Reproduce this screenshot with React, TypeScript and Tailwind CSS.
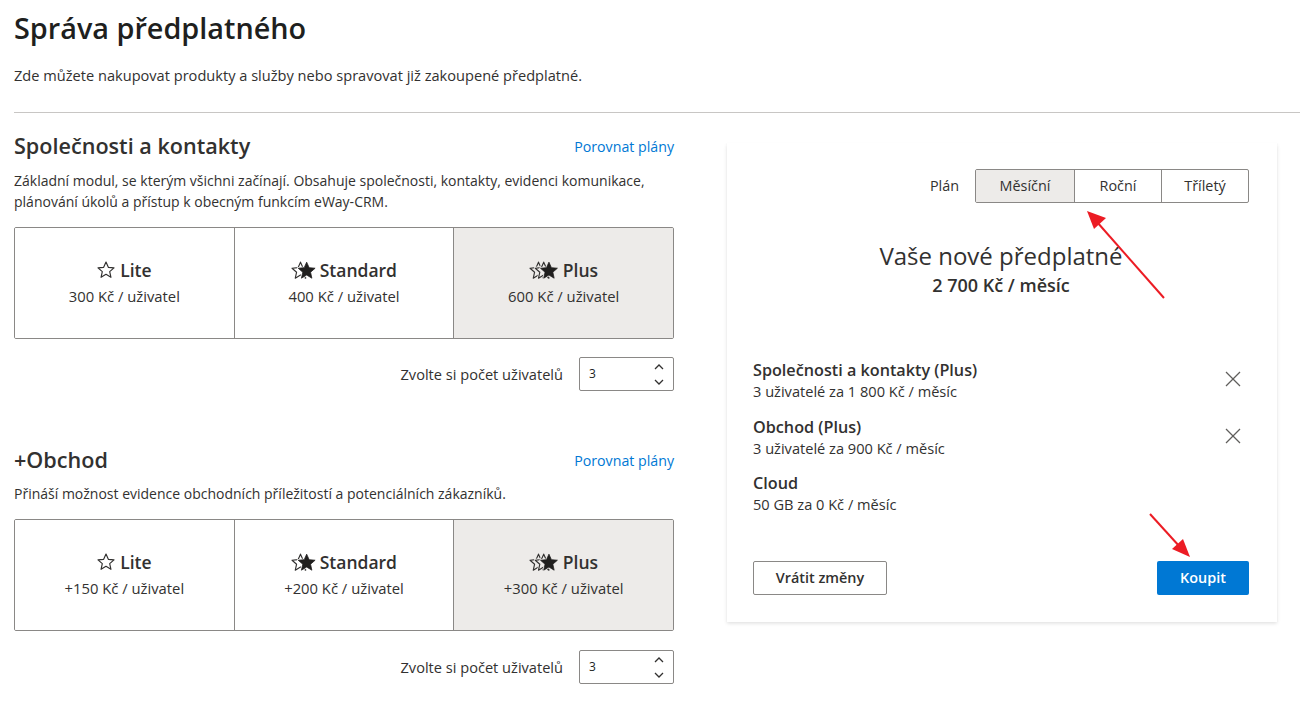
import React from "react";

const FONT = { fontFamily: '"Open Sans", "Noto Sans", Arial, sans-serif' };

const STAR = "10,1.2 12.6,7 18.9,7.6 14.1,11.8 15.5,18.1 10,14.8 4.5,18.1 5.9,11.8 1.1,7.6 7.4,7";

function Stars({ n, bg }: { n: number; bg: string }) {
  if (n === 1) {
    return (
      <svg width="18" height="18" viewBox="0 0 20 20" className="mr-[5px]">
        <polygon points={STAR} fill="none" stroke="#323130" strokeWidth="1.3" strokeLinejoin="round" />
      </svg>
    );
  }
  const w = n === 2 ? 26 : 31;
  return (
    <svg width={w * 0.95} height="19" viewBox={`0 0 ${w} 20`} className="mr-[4px]">
      <polygon points={STAR} fill={bg} stroke="#323130" strokeWidth="1.2" strokeLinejoin="round" />
      {n === 3 && (
        <g transform="translate(5.5,0)">
          <polygon points={STAR} fill={bg} stroke={bg} strokeWidth="3" strokeLinejoin="round" />
          <polygon points={STAR} fill={bg} stroke="#323130" strokeWidth="1.2" strokeLinejoin="round" />
        </g>
      )}
      <g transform={`translate(${n === 2 ? 6.5 : 11},0)`}>
        <polygon points={STAR} fill="#201f1e" stroke={bg} strokeWidth="2.6" strokeLinejoin="round" />
        <polygon points={STAR} fill="#201f1e" stroke="#201f1e" strokeWidth="0.8" strokeLinejoin="round" />
      </g>
    </svg>
  );
}

function Tier({ name, price, stars, selected, last }: { name: string; price: string; stars: number; selected?: boolean; last?: boolean }) {
  const bg = selected ? "#edebe9" : "#ffffff";
  return (
    <div
      className={`flex-1 flex flex-col items-center justify-center ${last ? "" : "border-r border-[#8a8886]"} ${selected ? "bg-[#edebe9]" : "bg-white"}`}
    >
      <div className="flex items-center h-[24px] mt-[-2px]">
        <Stars n={stars} bg={bg} />
        <span className="text-[17.5px] font-semibold leading-[24px] text-[#323130]">{name}</span>
      </div>
      <div className="text-[14.8px] leading-[20px] text-[#323130] mt-[4px]">{price}</div>
    </div>
  );
}

function Chevron({ up }: { up?: boolean }) {
  return (
    <svg width="10" height="6" viewBox="0 0 10 6">
      <polyline
        points={up ? "1,5 5,1 9,5" : "1,1 5,5 9,1"}
        fill="none"
        stroke="#323130"
        strokeWidth="1.3"
      />
    </svg>
  );
}

function NumberInput() {
  return (
    <div className="flex items-center justify-end">
      <span className="text-[14.6px] leading-[20px] text-[#323130] mr-[16px]">Zvolte si počet uživatelů</span>
      <div className="w-[95px] h-[34px] border border-[#8a8886] rounded-[2px] flex items-center justify-between pl-[9px] pr-[9px] bg-white">
        <span className="text-[12px] text-[#201f1e]">3</span>
        <div className="flex flex-col items-center gap-[9px]">
          <Chevron up />
          <Chevron />
        </div>
      </div>
    </div>
  );
}

function Section({
  title,
  desc,
  tiers,
  first,
}: {
  title: string;
  desc: React.ReactNode;
  tiers: { name: string; price: string }[];
  first?: boolean;
}) {
  return (
    <div className={first ? "mt-[19px]" : "mt-[55px]"}>
      <div className="flex items-center justify-between h-[28px]">
        <h2 className="text-[21.6px] leading-[28px] font-semibold text-[#323130]">{title}</h2>
        <a className="text-[14.2px] text-[#0078d4] leading-[20px] mt-[2px]">Porovnat plány</a>
      </div>
      <p className={`text-[14px] leading-[21px] text-[#323130] ${first ? "mt-[10px]" : "mt-[9px]"}`}>{desc}</p>
      <div className="mt-[15px] h-[112px] border border-[#8a8886] rounded-[2px] flex overflow-hidden">
        <Tier name={tiers[0].name} price={tiers[0].price} stars={1} />
        <Tier name={tiers[1].name} price={tiers[1].price} stars={2} />
        <Tier name={tiers[2].name} price={tiers[2].price} stars={3} selected last />
      </div>
      <div className={first ? "mt-[18px]" : "mt-[19px]"}>
        <NumberInput />
      </div>
    </div>
  );
}

function CloseIcon() {
  return (
    <svg width="16" height="16" viewBox="0 0 16 16" className="mr-[8px] mt-[-2px]">
      <line x1="1" y1="1" x2="15" y2="15" stroke="#605e5c" strokeWidth="1.2" />
      <line x1="15" y1="1" x2="1" y2="15" stroke="#605e5c" strokeWidth="1.2" />
    </svg>
  );
}

function Item({ title, sub, removable }: { title: string; sub: string; removable?: boolean }) {
  return (
    <div className="flex items-center justify-between">
      <div>
        <div className="text-[16.2px] leading-[22px] text-[#323130] font-semibold">{title}</div>
        <div className="text-[14.6px] leading-[20px] text-[#323130]">{sub}</div>
      </div>
      {removable && <CloseIcon />}
    </div>
  );
}

function Card() {
  return (
    <div className="w-[550px] h-[479px] mt-[30px] bg-white shadow-[0_1.6px_3.6px_rgba(0,0,0,0.13),0_0.3px_0.9px_rgba(0,0,0,0.11)] px-[26px] pt-[26px] pb-[27px] pr-[28px] flex flex-col">
      <div className="flex items-center justify-end">
        <span className="text-[14.4px] text-[#323130] mr-[16px]">Plán</span>
        <div className="flex h-[34px] border border-[#8a8886] rounded-[2px] overflow-hidden">
          <div className="w-[99px] bg-[#edebe9] border-r border-[#8a8886] flex items-center justify-center text-[14.4px] text-[#323130]">Měsíční</div>
          <div className="w-[87px] border-r border-[#8a8886] flex items-center justify-center text-[14.4px] text-[#323130]">Roční</div>
          <div className="w-[86px] flex items-center justify-center text-[14.4px] text-[#323130]">Tříletý</div>
        </div>
      </div>
      <div className="text-center mt-[37px] text-[24px] leading-[32px] text-[#323130]">Vaše nové předplatné</div>
      <div className="text-center mt-[2px] text-[18px] leading-[22px] font-semibold text-[#323130]">2 700 Kč / měsíc</div>
      <div className="mt-[63px]">
        <Item title="Společnosti a kontakty (Plus)" sub="3 uživatelé za 1 800 Kč / měsíc" removable />
      </div>
      <div className="mt-[15px]">
        <Item title="Obchod (Plus)" sub="3 uživatelé za 900 Kč / měsíc" removable />
      </div>
      <div className="mt-[14px]">
        <Item title="Cloud" sub="50 GB za 0 Kč / měsíc" />
      </div>
      <div className="mt-auto flex justify-between">
        <button className="w-[134px] h-[34px] border border-[#8a8886] rounded-[2px] bg-white text-[14.4px] font-semibold text-[#323130]">Vrátit změny</button>
        <button className="w-[92px] h-[34px] rounded-[2px] bg-[#0078d4] text-[14.4px] font-semibold text-white">Koupit</button>
      </div>
    </div>
  );
}

function Arrows() {
  return (
    <svg className="absolute left-0 top-0 pointer-events-none" width="1300" height="706" viewBox="0 0 1300 706">
      <line x1="1164" y1="298" x2="1097" y2="222" stroke="#ec1c24" strokeWidth="2" />
      <polygon points="1087,211 1106,218 1094,229" fill="#ec1c24" />
      <line x1="1150" y1="514" x2="1180" y2="547" stroke="#ec1c24" strokeWidth="2" />
      <polygon points="1190,557 1172,549 1183,539" fill="#ec1c24" />
    </svg>
  );
}

export default function App() {
  return (
    <div className="relative w-[1300px] h-[706px] overflow-hidden bg-white" style={FONT}>
      <div className="pl-[14px]">
        <h1 className="text-[28.8px] leading-[36px] font-semibold text-[#201f1e] pt-[10px]">Správa předplatného</h1>
        <p className="text-[14.6px] leading-[20px] text-[#323130] mt-[19px]">
          Zde můžete nakupovat produkty a služby nebo spravovat již zakoupené předplatné.
        </p>
        <div className="mt-[27px] h-px bg-[#c8c6c4]" />
        <div className="flex">
          <div className="w-[660px]">
            <Section
              first
              title="Společnosti a kontakty"
              desc={
                <>
                  Základní modul, se kterým všichni začínají. Obsahuje společnosti, kontakty, evidenci komunikace,
                  <br />
                  plánování úkolů a přístup k obecným funkcím eWay-CRM.
                </>
              }
              tiers={[
                { name: "Lite", price: "300 Kč / uživatel" },
                { name: "Standard", price: "400 Kč / uživatel" },
                { name: "Plus", price: "600 Kč / uživatel" },
              ]}
            />
            <Section
              title="+Obchod"
              desc="Přináší možnost evidence obchodních příležitostí a potenciálních zákazníků."
              tiers={[
                { name: "Lite", price: "+150 Kč / uživatel" },
                { name: "Standard", price: "+200 Kč / uživatel" },
                { name: "Plus", price: "+300 Kč / uživatel" },
              ]}
            />
          </div>
          <div className="ml-[53px]">
            <Card />
          </div>
        </div>
      </div>
      <Arrows />
    </div>
  );
}
